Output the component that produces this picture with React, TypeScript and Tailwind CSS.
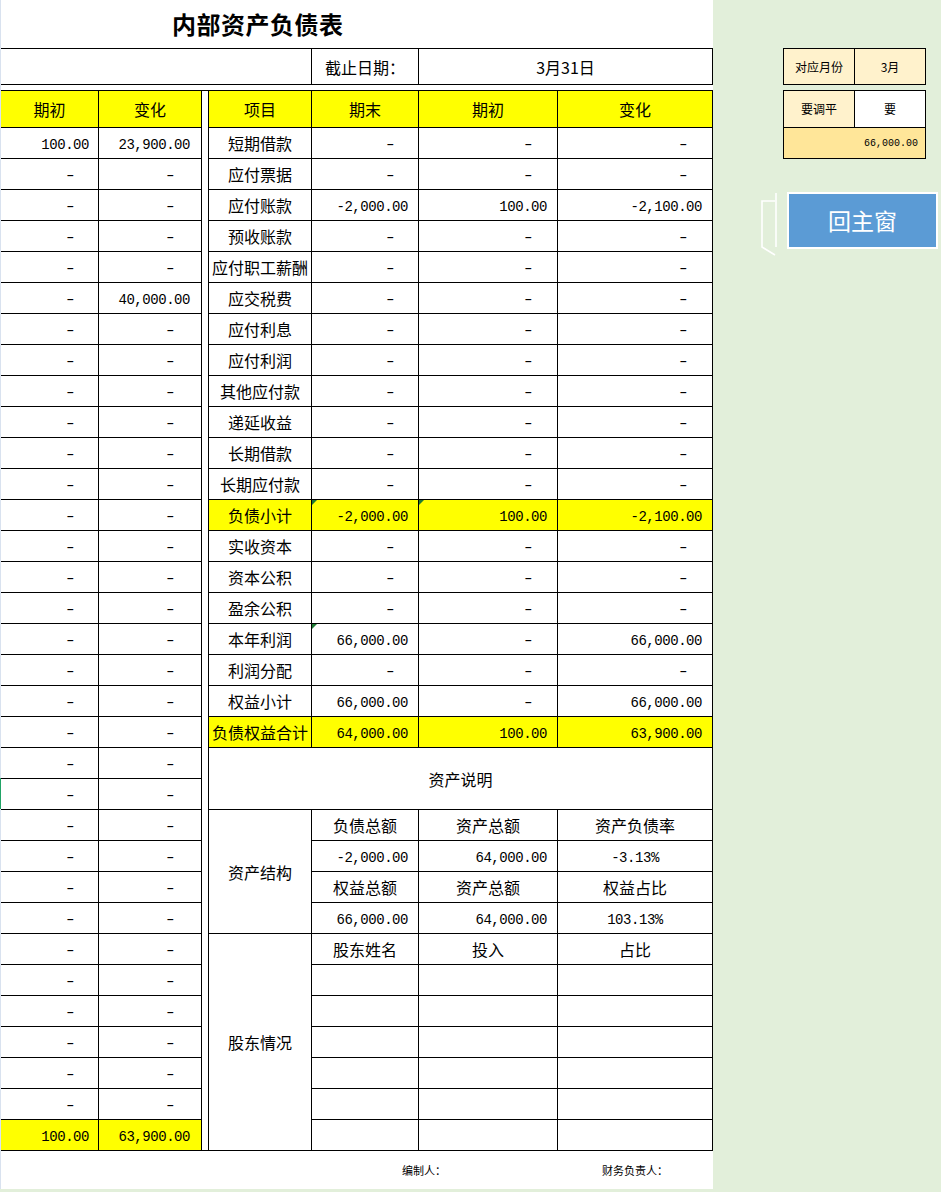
import React from "react";

type Row = { label: string; end: string; begin: string; change: string; yellow?: boolean; marks?: number[] };

const liab: Row[] = [
  { label: "短期借款", end: "-", begin: "-", change: "-" },
  { label: "应付票据", end: "-", begin: "-", change: "-" },
  { label: "应付账款", end: "-2,000.00", begin: "100.00", change: "-2,100.00" },
  { label: "预收账款", end: "-", begin: "-", change: "-" },
  { label: "应付职工薪酬", end: "-", begin: "-", change: "-" },
  { label: "应交税费", end: "-", begin: "-", change: "-" },
  { label: "应付利息", end: "-", begin: "-", change: "-" },
  { label: "应付利润", end: "-", begin: "-", change: "-" },
  { label: "其他应付款", end: "-", begin: "-", change: "-" },
  { label: "递延收益", end: "-", begin: "-", change: "-" },
  { label: "长期借款", end: "-", begin: "-", change: "-" },
  { label: "长期应付款", end: "-", begin: "-", change: "-" },
  { label: "负债小计", end: "-2,000.00", begin: "100.00", change: "-2,100.00", yellow: true, marks: [1, 2] },
  { label: "实收资本", end: "-", begin: "-", change: "-" },
  { label: "资本公积", end: "-", begin: "-", change: "-" },
  { label: "盈余公积", end: "-", begin: "-", change: "-" },
  { label: "本年利润", end: "66,000.00", begin: "-", change: "66,000.00", marks: [1] },
  { label: "利润分配", end: "-", begin: "-", change: "-" },
  { label: "权益小计", end: "66,000.00", begin: "-", change: "66,000.00" },
  { label: "负债权益合计", end: "64,000.00", begin: "100.00", change: "63,900.00", yellow: true },
];

const leftRows: [string, string][] = Array.from({ length: 32 }, (_, i) =>
  i === 0 ? ["100.00", "23,900.00"] : i === 5 ? ["-", "40,000.00"] : ["-", "-"]
);

function Mark() {
  return (
    <svg className="absolute left-0 top-0" width="5" height="5" viewBox="0 0 5 5">
      <polygon points="0,0 5,0 0,5" fill="#1e7b34" />
    </svg>
  );
}

function Num({ v, w, dashPad, numPad, mark, bg }: { v: string; w: string; dashPad: string; numPad: string; mark?: boolean; bg?: string }) {
  const isDash = v === "-";
  return (
    <div className={`${w} ${bg ?? ""} relative h-full border-r border-black flex items-center justify-end font-['Liberation_Mono',monospace] text-[14px] tracking-[-0.45px] leading-none ${isDash ? dashPad : numPad}`}>
      {mark ? <Mark /> : null}
      {isDash ? (
        <span className="inline-block w-[8px] text-center pt-[3px] scale-x-[1.5]">-</span>
      ) : (
        <span className="pt-[4px]">{v}</span>
      )}
    </div>
  );
}

function Label({ t, w, bg }: { t: string; w: string; bg?: string }) {
  return (
    <div className={`${w} ${bg ?? ""} h-full border-r border-black flex items-center justify-center text-[16px] leading-none whitespace-nowrap`}>
      {t}
    </div>
  );
}

export default function App() {
  return (
    <div className="min-h-[1192px] w-[941px] bg-[#e2efda] flex items-start font-['Noto_Sans_CJK_SC',sans-serif] text-black">
      {/* sheet */}
      <div className="flex bg-white">
        <div className="w-[1px] flex flex-col">
          <div className="h-[778px] bg-[#d9e2ef]" />
          <div className="h-[31px] bg-[#21a366]" />
          <div className="flex-1 bg-[#d9e2ef]" />
        </div>
        <div className="w-[712px] flex flex-col">
          {/* title */}
          <div className="h-[49px] border-b border-black flex items-center pl-[171px]">
            <span className="text-[24px] font-bold tracking-[0.5px] leading-none">内部资产负债表</span>
          </div>
          {/* date row */}
          <div className="h-[36px] border-b border-black flex">
            <div className="w-[311px] h-full border-r border-black" />
            <div className="w-[107px] h-full border-r border-black flex items-center justify-center text-[16px] leading-none">截止日期：</div>
            <div className="w-[294px] h-full border-r border-black flex items-center justify-center text-[16px] leading-none">3月31日</div>
          </div>
          <div className="h-[5px]" />
          {/* main */}
          <div className="flex border-t border-black">
            {/* left block */}
            <div className="flex flex-col">
              <div className="h-[37px] flex border-b border-black bg-[#ffff00]">
                <Label t="期初" w="w-[98px]" />
                <Label t="变化" w="w-[103px]" />
              </div>
              {leftRows.map((r, i) => (
                <div key={i} className="h-[31px] flex border-b border-black">
                  <Num v={r[0]} w="w-[98px]" dashPad="pr-[24px]" numPad="pr-[9px]" />
                  <Num v={r[1]} w="w-[103px]" dashPad="pr-[27px]" numPad="pr-[11px]" />
                </div>
              ))}
              <div className="h-[31px] flex border-b border-black bg-[#ffff00]">
                <Num v="100.00" w="w-[98px]" dashPad="pr-[24px]" numPad="pr-[9px]" />
                <Num v="63,900.00" w="w-[103px]" dashPad="pr-[27px]" numPad="pr-[11px]" />
              </div>
            </div>
            {/* gap */}
            <div className="w-[6px] border-b border-black" />
            {/* right block */}
            <div className="flex flex-col border-l border-black">
              <div className="h-[37px] flex border-b border-black bg-[#ffff00]">
                <Label t="项目" w="w-[103px]" />
                <Label t="期末" w="w-[107px]" />
                <Label t="期初" w="w-[139px]" />
                <Label t="变化" w="w-[155px]" />
              </div>
              {liab.map((r, i) => (
                <div key={i} className={`h-[31px] flex border-b border-black ${r.yellow ? "bg-[#ffff00]" : ""}`}>
                  <Label t={r.label} w="w-[103px]" />
                  <Num v={r.end} w="w-[107px]" dashPad="pr-[24px]" numPad="pr-[10px]" mark={r.marks?.includes(1)} />
                  <Num v={r.begin} w="w-[139px]" dashPad="pr-[25px]" numPad="pr-[10px]" mark={r.marks?.includes(2)} />
                  <Num v={r.change} w="w-[155px]" dashPad="pr-[25px]" numPad="pr-[10px]" />
                </div>
              ))}
              <div className="h-[62px] border-b border-r border-black flex items-center justify-center text-[16px] leading-none">资产说明</div>
              {/* 资产结构 */}
              <div className="flex">
                <div className="w-[103px] h-[124px] border-r border-b border-black flex items-center justify-center text-[16px] leading-none">资产结构</div>
                <div className="flex flex-col">
                  <div className="h-[31px] flex border-b border-black">
                    <Label t="负债总额" w="w-[107px]" />
                    <Label t="资产总额" w="w-[139px]" />
                    <Label t="资产负债率" w="w-[155px]" />
                  </div>
                  <div className="h-[31px] flex border-b border-black">
                    <Num v="-2,000.00" w="w-[107px]" dashPad="pr-[24px]" numPad="pr-[10px]" />
                    <Num v="64,000.00" w="w-[139px]" dashPad="pr-[25px]" numPad="pr-[10px]" />
                    <div className="w-[155px] h-full border-r border-black flex items-center justify-center pt-[4px] font-['Liberation_Mono',monospace] text-[14px] tracking-[-0.45px] leading-none">-3.13%</div>
                  </div>
                  <div className="h-[31px] flex border-b border-black">
                    <Label t="权益总额" w="w-[107px]" />
                    <Label t="资产总额" w="w-[139px]" />
                    <Label t="权益占比" w="w-[155px]" />
                  </div>
                  <div className="h-[31px] flex border-b border-black">
                    <Num v="66,000.00" w="w-[107px]" dashPad="pr-[24px]" numPad="pr-[10px]" />
                    <Num v="64,000.00" w="w-[139px]" dashPad="pr-[25px]" numPad="pr-[10px]" />
                    <div className="w-[155px] h-full border-r border-black flex items-center justify-center pt-[4px] font-['Liberation_Mono',monospace] text-[14px] tracking-[-0.45px] leading-none">103.13%</div>
                  </div>
                </div>
              </div>
              {/* 股东情况 */}
              <div className="flex">
                <div className="w-[103px] h-[217px] border-r border-b border-black flex items-center justify-center text-[16px] leading-none">股东情况</div>
                <div className="flex flex-col">
                  <div className="h-[31px] flex border-b border-black">
                    <Label t="股东姓名" w="w-[107px]" />
                    <Label t="投入" w="w-[139px]" />
                    <Label t="占比" w="w-[155px]" />
                  </div>
                  {Array.from({ length: 6 }, (_, i) => (
                    <div key={i} className="h-[31px] flex border-b border-black">
                      <div className="w-[107px] h-full border-r border-black" />
                      <div className="w-[139px] h-full border-r border-black" />
                      <div className="w-[155px] h-full border-r border-black" />
                    </div>
                  ))}
                </div>
              </div>
            </div>
          </div>
          {/* footer */}
          <div className="h-[38px] flex items-center pl-[401px] text-[11px] leading-none">
            <span className="w-[200px]">编制人：</span>
            <span>财务负责人：</span>
          </div>
        </div>
      </div>
      {/* right panel */}
      <div className="flex-1 flex flex-col pt-[48px]">
        <div className="ml-[70px] w-[143px] h-[37px] border border-black bg-[#fff2cc] flex text-[12px] leading-none">
          <div className="w-[71px] h-full border-r border-black flex items-center justify-center">对应月份</div>
          <div className="flex-1 h-full flex items-center justify-center">3月</div>
        </div>
        <div className="ml-[70px] mt-[5px] w-[143px] h-[69px] border border-black flex flex-col text-[12px] leading-none">
          <div className="h-[37px] flex border-b border-black">
            <div className="w-[71px] h-full border-r border-black bg-[#fff2cc] flex items-center justify-center">要调平</div>
            <div className="flex-1 h-full bg-white flex items-center justify-center">要</div>
          </div>
          <div className="flex-1 bg-[#ffe699] flex items-center justify-end pr-[7px] pt-[2px] font-['Liberation_Mono',monospace] text-[10px]">66,000.00</div>
        </div>
        <div className="mt-[33px] pl-[48px] flex items-start">
          <svg width="16" height="64" viewBox="0 0 16 64" className="shrink-0">
            <line x1="15" y1="1" x2="15" y2="55" stroke="#ffffff" strokeWidth="1.6" />
            <polyline points="14,9 1,9 1,55 14,63" fill="none" stroke="#ffffff" strokeWidth="1.6" />
          </svg>
          <div className="ml-[10px] w-[151px] h-[57px] border-2 border-white bg-[#5b9bd5] flex items-center justify-center text-white text-[23px] leading-none">
            回主窗
          </div>
        </div>
      </div>
    </div>
  );
}
